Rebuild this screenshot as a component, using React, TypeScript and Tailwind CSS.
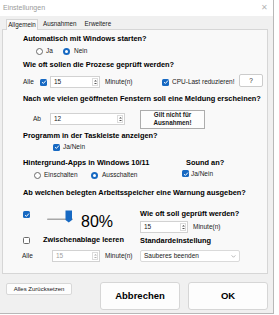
import React from 'react';

type CheckProps = { checked?: boolean };

const Check: React.FC<CheckProps> = ({ checked }) =>
  checked ? (
    <span className="w-[7px] h-[7px] rounded-[1.5px] bg-[#1769c2] flex items-center justify-center shrink-0">
      <svg viewBox="0 0 8 8" className="w-[6px] h-[6px]">
        <path d="M1.4 4.2 L3.2 5.9 L6.6 2.1" stroke="#fff" strokeWidth="1.3" fill="none" />
      </svg>
    </span>
  ) : (
    <span className="w-[7px] h-[7px] rounded-[1.5px] border border-[#6b6b6b] bg-white shrink-0" />
  );

const Radio: React.FC<CheckProps> = ({ checked }) =>
  checked ? (
    <span className="w-[7px] h-[7px] rounded-full bg-[#1769c2] flex items-center justify-center shrink-0">
      <span className="w-[3px] h-[3px] rounded-full bg-white" />
    </span>
  ) : (
    <span className="w-[7px] h-[7px] rounded-full border border-[#6b6b6b] bg-white shrink-0" />
  );

type SpinProps = { value: string; width: string; disabled?: boolean };

const Spin: React.FC<SpinProps> = ({ value, width, disabled }) => (
  <div className={`${width} h-[12px] bg-white border border-[#d2d2d2] flex items-center shrink-0`}>
    <span className={`flex-1 pl-[3px] text-[6.5px] leading-none ${disabled ? 'text-[#a0a0a0]' : 'text-[#1a1a1a]'}`}>
      {value}
    </span>
    <div className="w-[6px] h-[8px] mr-[1px] border border-[#dcdcdc] flex flex-col items-center justify-center gap-[1px]">
      <svg viewBox="0 0 4 2" className="w-[3px] h-[1.5px]">
        <path d="M0 2 L2 0 L4 2 Z" fill={disabled ? '#b0b0b0' : '#555'} />
      </svg>
      <svg viewBox="0 0 4 2" className="w-[3px] h-[1.5px]">
        <path d="M0 0 L2 2 L4 0 Z" fill={disabled ? '#b0b0b0' : '#555'} />
      </svg>
    </div>
  </div>
);

const Heading: React.FC<{ children: React.ReactNode; className?: string }> = ({ children, className = '' }) => (
  <div className={`h-[12px] flex items-center pl-[20px] text-[7.4px] font-bold text-black whitespace-nowrap ${className}`}>
    {children}
  </div>
);

const App: React.FC = () => {
  return (
    <div className="w-[279px] h-[315px] bg-white overflow-hidden font-['Liberation_Sans',Arial,sans-serif] text-[#1a1a1a]">
      <div className="w-[274px] h-[314px] bg-[#f0f0f0] border-r border-b border-[#b8b8b8] flex flex-col">
        {/* Title bar */}
        <div className="h-[16px] bg-white flex items-center justify-between pl-[3px] pr-[5px] shrink-0">
          <span className="text-[7px] text-[#9a9a9a]">Einstellungen</span>
          <span className="text-[8px] text-[#b5b5b5] leading-none">✕</span>
        </div>

        {/* Tabs */}
        <div className="h-[13px] flex items-end pl-[6px] text-[6.3px] shrink-0">
          <div className="relative z-10 w-[32px] h-[11px] -mb-[1px] border border-b-0 border-[#d6d6d6] bg-[#f9f9f9] flex items-center justify-center">
            Allgemein
          </div>
          <div className="h-[10px] flex items-center ml-[5px]">Ausnahmen</div>
          <div className="h-[10px] flex items-center ml-[8px]">Erweitere</div>
        </div>

        {/* Panel */}
        <div className="ml-[2px] w-[266px] h-[245px] border border-[#d6d6d6] bg-[#f9f9f9] flex flex-col shrink-0">
          <Heading className="mt-[3px]">Automatisch mit Windows starten?</Heading>
          <div className="h-[12px] flex items-center pl-[33px] text-[6.5px]">
            <Radio />
            <span className="ml-[3px] w-[17px]">Ja</span>
            <Radio checked />
            <span className="ml-[4px]">Nein</span>
          </div>

          <Heading className="mt-[2px]">Wie oft sollen die Prozese geprüft werden?</Heading>
          <div className="mt-[3px] h-[16px] flex items-center pl-[20px] pr-[4px] text-[6.5px]">
            <span className="w-[17px]">Alle</span>
            <Check checked />
            <div className="ml-[3px]">
              <Spin value="15" width="w-[50px]" />
            </div>
            <span className="ml-[5px] w-[57px]">Minute(n)</span>
            <Check checked />
            <span className="ml-[3px]">CPU-Last reduzieren!</span>
            <button className="ml-auto self-start w-[24px] h-[13px] bg-white border border-[#cccccc] rounded-[2px] text-[6.5px] flex items-center justify-center">
              ?
            </button>
          </div>

          <Heading className="mt-[3px]">Nach wie vielen geöffneten Fenstern soll eine Meldung erscheinen?</Heading>
          <div className="mt-[4px] h-[20px] flex items-center pl-[30px] text-[6.5px]">
            <span className="w-[17px]">Ab</span>
            <Spin value="12" width="w-[75px]" />
            <button className="ml-[15px] w-[65px] h-[19px] bg-[#fdfdfd] border border-[#adadad] text-[6.3px] font-bold leading-[8px] flex items-center justify-center text-center">
              Gilt nicht für
              <br />
              Ausnahmen!
            </button>
          </div>

          <Heading className="mt-[1px]">Programm in der Taskleiste anzeigen?</Heading>
          <div className="h-[10px] flex items-center pl-[50px] text-[6.5px]">
            <Check checked />
            <span className="ml-[3px]">Ja/Nein</span>
          </div>

          <div className="mt-[5px] h-[12px] flex items-center pl-[20px] text-[7.4px] font-bold text-black whitespace-nowrap">
            <span className="w-[163px]">Hintergrund-Apps in Windows 10/11</span>
            <span>Sound an?</span>
          </div>
          <div className="h-[12px] flex items-center pl-[31px] text-[6.5px]">
            <Radio />
            <span className="ml-[3px] w-[47px]">Einschalten</span>
            <Radio checked />
            <span className="ml-[4px] w-[80px]">Ausschalten</span>
            <div className="flex items-center -mt-[3px]">
              <Check checked />
              <span className="ml-[2px]">Ja/Nein</span>
            </div>
          </div>

          <Heading className="mt-[6px]">Ab welchen belegten Arbeitsspeicher eine Warnung ausgeben?</Heading>

          <div className="flex">
            {/* Left column */}
            <div className="w-[137px] flex flex-col">
              <div className="mt-[8px] h-[22px] flex items-start pl-[20px]">
                <div className="mt-[4px]">
                  <Check checked />
                </div>
                <svg viewBox="0 0 27 13" className="ml-[17px] mt-[3px] w-[27px] h-[13px] shrink-0">
                  <rect x="0" y="8.5" width="26" height="1.5" rx="0.7" fill="#a8a8a8" />
                  <path d="M18.5 0.5 H25 V10 L21.75 12.5 L18.5 10 Z" fill="#1769c2" />
                </svg>
                <span className="ml-[7px] mt-[7px] text-[16px] leading-[16px] text-black">80%</span>
              </div>
              <div className="mt-[5px] h-[12px] flex items-center pl-[20px]">
                <Check />
                <span className="ml-[13px] text-[7.4px] font-bold text-black">Zwischenablage leeren</span>
              </div>
              <div className="mt-[4px] h-[12px] flex items-center pl-[19px] text-[6.5px]">
                <span className="w-[30px]">Alle</span>
                <Spin value="15" width="w-[48px]" disabled />
                <span className="ml-[5px]">Minute(n)</span>
              </div>
            </div>

            {/* Right column */}
            <div className="flex-1 flex flex-col">
              <div className="mt-[9px] h-[12px] flex items-center text-[7.4px] font-bold text-black whitespace-nowrap">
                Wie oft soll geprüft werden?
              </div>
              <div className="mt-[1px] h-[12px] flex items-center text-[6.5px]">
                <Spin value="15" width="w-[48px]" />
                <span className="ml-[5px]">Minute(n)</span>
              </div>
              <div className="mt-[2px] h-[12px] flex items-center text-[7.4px] font-bold text-black">
                Standardeinstellung
              </div>
              <div className="mt-[3px] w-[100px] h-[12px] bg-white border border-[#dadada] rounded-[2px] flex items-center justify-between pl-[3px] pr-[3px] text-[6.5px]">
                <span>Sauberes beenden</span>
                <svg viewBox="0 0 6 4" className="w-[5px] h-[3px]">
                  <path d="M0.5 0.5 L3 3 L5.5 0.5" stroke="#888" strokeWidth="0.8" fill="none" />
                </svg>
              </div>
            </div>
          </div>
        </div>

        {/* Bottom buttons */}
        <div className="mt-[8px] flex items-start">
          <button className="ml-[6px] mt-[1px] w-[66px] h-[12px] bg-[#fdfdfd] border border-[#d8d8d8] rounded-[2px] text-[6px] flex items-center justify-center">
            Alles Zurücksetzen
          </button>
          <button className="ml-[28px] w-[80px] h-[28px] bg-[#fdfdfd] border border-[#d6d6d6] rounded-[3px] text-[9.5px] font-bold text-black flex items-center justify-center">
            Abbrechen
          </button>
          <button className="ml-[8px] w-[80px] h-[28px] bg-[#fdfdfd] border border-[#d6d6d6] rounded-[3px] text-[9.5px] font-bold text-black flex items-center justify-center">
            OK
          </button>
        </div>
      </div>
    </div>
  );
};

export default App;
